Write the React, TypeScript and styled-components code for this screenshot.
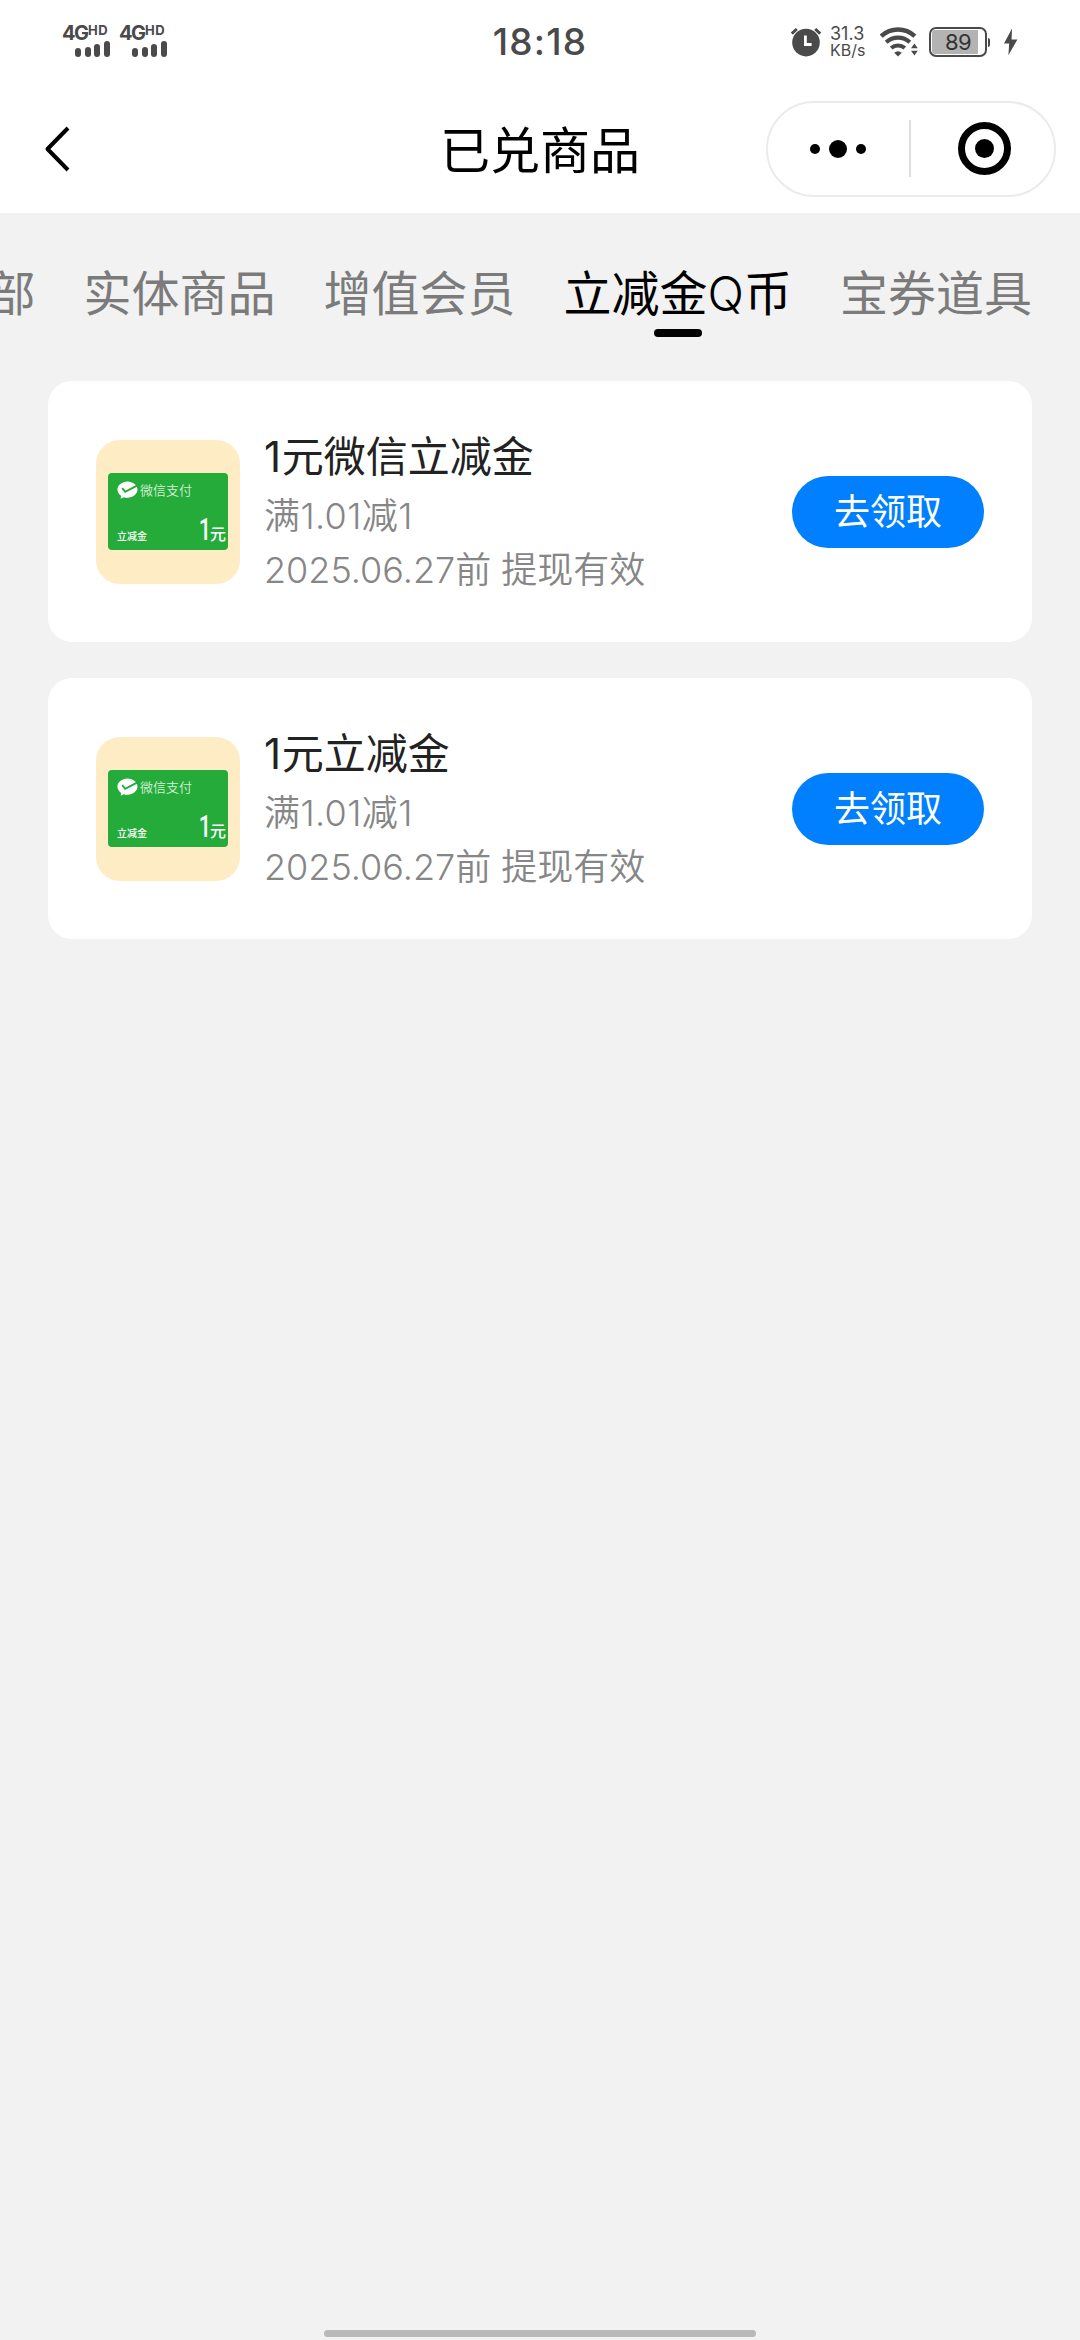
import React from "react";
import styled, { createGlobalStyle } from "styled-components";

const GlobalStyle = createGlobalStyle`
  * { box-sizing: border-box; }
  html, body { margin: 0; padding: 0; background: #f2f2f2; }
  body {
    width: 1080px;
    overflow: hidden;
    font-family: Inter, "Noto Sans CJK SC", sans-serif;
    font-weight: 400;
  }
`;

const Screen = styled.div`
  width: 1080px;
  height: 2340px;
  display: flex;
  flex-direction: column;
  background: #f2f2f2;
  overflow: hidden;
`;

const StatusBar = styled.header`
  height: 84px;
  flex: none;
  display: grid;
  grid-template-columns: 1fr auto 1fr;
  align-items: center;
  padding: 0 62px;
  background: #fff;
  color: #4a4a4a;
`;

const SignalGroup = styled.div`
  display: flex;
  gap: 9px;
  align-self: start;
  padding-top: 25px;
`;

const Signal = styled.div`
  width: 48px;
  height: 32px;
  display: flex;
  flex-direction: column;
  justify-content: space-between;
`;

const NetworkLabel = styled.div`
  display: flex;
  align-items: flex-start;
  height: 14px;
  font-weight: 700;
`;

const Generation = styled.span`
  width: 26px;
  font-size: 20px;
  line-height: 16px;
  letter-spacing: -1.6px;
`;

const HighDef = styled.span`
  font-size: 13px;
  line-height: 10px;
  letter-spacing: 0.6px;
`;

const Bars = styled.div`
  display: flex;
  align-items: flex-end;
  justify-content: flex-end;
  gap: 3.6px;
`;

const Bar = styled.span<{ $h: number }>`
  width: 6px;
  height: ${(p) => p.$h}px;
  border-radius: 3px;
  background: #4a4a4a;
`;

const Clock = styled.time`
  font-size: 37px;
  line-height: 44px;
  font-weight: 500;
  letter-spacing: 1.2px;
`;

const StatusIcons = styled.div`
  display: flex;
  align-items: center;
  justify-content: flex-end;
`;

const Speed = styled.div`
  width: 36px;
  margin: 0 14px 0 8px;
  display: flex;
  flex-direction: column;
  font-size: 18px;
  line-height: 17px;
`;

const SpeedUnit = styled.span`
  font-size: 16px;
`;

const BatteryShell = styled.div`
  width: 58px;
  height: 30px;
  margin-left: 11px;
  padding: 1px;
  border: 2px solid #4a4a4a;
  border-radius: 7px;
`;

const BatteryLevel = styled.div`
  width: 46px;
  height: 24px;
  border-radius: 3px 0 0 3px;
  background: #b3b3b3;
  padding-left: 13px;
  font-size: 22px;
  line-height: 24px;
  letter-spacing: -0.6px;
  color: #333;
`;

const BatteryNub = styled.span`
  width: 2px;
  height: 9px;
  background: #4a4a4a;
  margin: 0 13px 0 1px;
  border-radius: 0 2px 2px 0;
`;

const NavBar = styled.nav`
  height: 129px;
  flex: none;
  display: grid;
  grid-template-columns: 1fr auto 1fr;
  align-items: center;
  padding: 0 24px 0 42px;
  background: #fff;
`;

const BackButton = styled.button`
  display: flex;
  width: 30px;
  height: 48px;
  padding: 0;
  border: 0;
  background: none;
`;

const PageTitle = styled.h1`
  margin: 0;
  padding: 4px 18px 0 0;
  font-size: 50px;
  line-height: 70px;
  font-weight: 400;
  color: #000;
`;

const Capsule = styled.div`
  justify-self: end;
  width: 290px;
  height: 96px;
  display: flex;
  align-items: center;
  border: 2px solid #ebebeb;
  border-radius: 48px;
`;

const CapsuleButton = styled.button<{ $inset: string }>`
  flex: 1 1 0;
  height: 100%;
  display: flex;
  align-items: center;
  justify-content: center;
  gap: 9px;
  padding: ${(p) => p.$inset};
  border: 0;
  background: none;
`;

const Divider = styled.span`
  width: 2px;
  height: 57px;
  background: #dedede;
`;

const Dot = styled.span<{ $size: number }>`
  width: ${(p) => p.$size}px;
  height: ${(p) => p.$size}px;
  border-radius: 50%;
  background: #000;
`;

const Ring = styled.span`
  width: 53px;
  height: 53px;
  display: flex;
  align-items: center;
  justify-content: center;
  border: 7px solid #000;
  border-radius: 50%;
`;

const Tabs = styled.div`
  flex: none;
  height: 168px;
  display: flex;
  justify-content: flex-end;
  gap: 48px;
  padding: 46px 48px 0;
`;

const Tab = styled.div<{ $active?: boolean }>`
  flex: none;
  display: flex;
  flex-direction: column;
  align-items: center;
  font-size: 48px;
  line-height: 70px;
  white-space: nowrap;
  color: ${(p) => (p.$active ? "#000" : "#7b7b7b")};
`;

const Indicator = styled.span`
  width: 48px;
  height: 8px;
  border-radius: 4px;
  background: #000;
`;

const Latin = styled.span`
  font-weight: 350;
`;

const List = styled.main`
  flex: 1;
  display: flex;
  flex-direction: column;
  gap: 36px;
  padding: 0 48px;
`;

const Card = styled.article`
  height: 261px;
  display: flex;
  align-items: center;
  gap: 24px;
  padding: 0 48px;
  border-radius: 24px;
  background: #fff;
`;

const Thumb = styled.div`
  flex: none;
  width: 144px;
  height: 144px;
  display: flex;
  align-items: center;
  justify-content: center;
  border-radius: 24px;
  background: #feedc4;
`;

const Coupon = styled.div`
  width: 120px;
  height: 77px;
  display: flex;
  flex-direction: column;
  justify-content: space-between;
  padding: 8px 2px 4px 9px;
  border-radius: 4px;
  background: #24ab39;
  color: #fff;
`;

const CouponBrand = styled.div`
  display: flex;
  align-items: center;
  gap: 2px;
  height: 18px;
  font-size: 13px;
  line-height: 18px;
  font-weight: 350;
  color: #d3eed7;
`;

const CouponFoot = styled.div`
  display: flex;
  align-items: flex-end;
  justify-content: space-between;
  height: 24px;
`;

const CouponKind = styled.span`
  font-size: 10px;
  line-height: 19px;
  font-weight: 500;
`;

const CouponValue = styled.span`
  display: flex;
  align-items: baseline;
  font-size: 16px;
  line-height: 24px;
  font-weight: 500;
`;

const CouponAmount = styled.span`
  display: inline-block;
  font-family: Roboto, sans-serif;
  font-size: 31px;
  font-weight: 500;
  margin-right: -4px;
  transform: scaleX(0.7);
`;

const Info = styled.div`
  flex: 1;
  display: flex;
  flex-direction: column;
`;

const ItemTitle = styled.h2`
  margin: 0 0 3px;
  font-size: 42px;
  line-height: 59px;
  font-weight: 400;
  color: #222;
`;

const TitleAmount = styled.span`
  font-weight: 400;
  letter-spacing: 0.6px;
`;

const Detail = styled.p<{ $tracking?: number }>`
  margin: 0;
  font-size: 36px;
  line-height: 54px;
  font-weight: 350;
  letter-spacing: ${(p) => p.$tracking ?? 0}px;
  color: #868686;
  white-space: nowrap;
`;

const ClaimButton = styled.button`
  flex: none;
  width: 192px;
  height: 72px;
  padding: 0;
  border: 0;
  border-radius: 36px;
  background: #0080ff;
  color: #fff;
  font-family: inherit;
  font-size: 36px;
  line-height: 70px;
`;

const HomeBar = styled.div`
  flex: none;
  align-self: center;
  width: 432px;
  height: 7px;
  margin-bottom: 3px;
  border-radius: 4px;
  background: #b9b9b9;
`;

const AlarmIcon = () => (
  <svg width="32" height="30" viewBox="0 0 32 30" fill="none">
    <circle cx="16" cy="15.6" r="13.8" fill="#4a4a4a" />
    <path d="M1.8 6.6 6.8 2M30.2 6.6 25.2 2" stroke="#4a4a4a" strokeWidth="3" />
    <path d="M15.4 8.5v9h6.2" stroke="#fff" strokeWidth="2.8" />
  </svg>
);

const WifiIcon = () => (
  <svg width="38" height="30" viewBox="0 0 38 30" fill="none">
    <path d="M1.2 9.2a24.5 24.5 0 0 1 33.6 0" stroke="#4a4a4a" strokeWidth="4.4" />
    <path d="M6.2 15.3a17.4 17.4 0 0 1 23.6 0" stroke="#4a4a4a" strokeWidth="4.2" />
    <path d="M11.2 21a10.3 10.3 0 0 1 13.6 0" stroke="#4a4a4a" strokeWidth="4" />
    <path d="M14.2 25.8a6 6 0 0 1 7.6 0L18 29.6z" fill="#4a4a4a" />
    <path d="M30 15h8v14h-8z" fill="#fff" />
    <path d="M31 21.2 34.4 16.4 37.8 21.2zM31 23.8 34.4 28.6 37.8 23.8z" fill="#4a4a4a" />
  </svg>
);

const BoltIcon = () => (
  <svg width="15" height="28" viewBox="0 0 15 28">
    <path d="M9 .6 1 15.6h5.2L5.4 27.2 14.4 11.6H8.6z" fill="#4a4a4a" />
  </svg>
);

const BackIcon = () => (
  <svg width="30" height="48" viewBox="0 0 30 48" fill="none">
    <path d="M26 3 5.5 24 26 45" stroke="#000" strokeWidth="4" strokeLinejoin="round" />
  </svg>
);

const PayLogo = () => (
  <svg width="21" height="18" viewBox="0 0 21 18">
    <path
      d="M10.5 .4C5 .4 .4 4 .4 8.6c0 2.6 1.4 4.8 3.7 6.3L3.6 17.7 6.7 16.2c1.2.4 2.5.6 3.8.6 5.5 0 10-3.6 10-8.2S16 .4 10.5 .4z"
      fill="#fff"
    />
    <path d="M5.2 7.2 8.2 10.9 20 4.6" fill="none" stroke="#24ab39" strokeWidth="1.9" />
  </svg>
);

const SignalMark = () => (
  <Signal>
    <NetworkLabel>
      <Generation>4G</Generation>
      <HighDef>HD</HighDef>
    </NetworkLabel>
    <Bars>
      {[9, 10.5, 13.5, 16.5].map((h) => (
        <Bar key={h} $h={h} />
      ))}
    </Bars>
  </Signal>
);

const tabs = [
  { id: "all", label: "全部" },
  { id: "goods", label: "实体商品" },
  { id: "vip", label: "增值会员" },
  {
    id: "coupon",
    label: (
      <span>
        立减金<Latin>Q</Latin>币
      </span>
    ),
  },
  { id: "props", label: "宝券道具" },
];
const activeTab = "coupon";

const items = [
  { id: 1, name: "元微信立减金" },
  { id: 2, name: "元立减金" },
];

export default function App() {
  return (
    <>
      <GlobalStyle />
      <Screen lang="zh-CN">
        <StatusBar>
          <SignalGroup>
            <SignalMark />
            <SignalMark />
          </SignalGroup>
          <Clock>18:18</Clock>
          <StatusIcons>
            <AlarmIcon />
            <Speed>
              <span>31.3</span>
              <SpeedUnit>KB/s</SpeedUnit>
            </Speed>
            <WifiIcon />
            <BatteryShell>
              <BatteryLevel>89</BatteryLevel>
            </BatteryShell>
            <BatteryNub />
            <BoltIcon />
          </StatusIcons>
        </StatusBar>
        <NavBar>
          <BackButton aria-label="返回">
            <BackIcon />
          </BackButton>
          <PageTitle>已兑商品</PageTitle>
          <Capsule>
            <CapsuleButton $inset="0 2px 0 0">
              <Dot $size={10} />
              <Dot $size={18} />
              <Dot $size={10} />
            </CapsuleButton>
            <Divider />
            <CapsuleButton $inset="0 0 0 4px">
              <Ring>
                <Dot $size={19} />
              </Ring>
            </CapsuleButton>
          </Capsule>
        </NavBar>
        <Tabs>
          {tabs.map((t) => (
            <Tab key={t.id} $active={t.id === activeTab}>
              {t.label}
              {t.id === activeTab && <Indicator />}
            </Tab>
          ))}
        </Tabs>
        <List>
          {items.map((item) => (
            <Card key={item.id}>
              <Thumb>
                <Coupon>
                  <CouponBrand>
                    <PayLogo />
                    微信支付
                  </CouponBrand>
                  <CouponFoot>
                    <CouponKind>立减金</CouponKind>
                    <CouponValue>
                      <CouponAmount>1</CouponAmount>元
                    </CouponValue>
                  </CouponFoot>
                </Coupon>
              </Thumb>
              <Info>
                <ItemTitle>
                  <TitleAmount>1</TitleAmount>
                  {item.name}
                </ItemTitle>
                <Detail $tracking={0.4}>满1.01减1</Detail>
                <Detail>2025.06.27前 提现有效</Detail>
              </Info>
              <ClaimButton>去领取</ClaimButton>
            </Card>
          ))}
        </List>
        <HomeBar />
      </Screen>
    </>
  );
}
